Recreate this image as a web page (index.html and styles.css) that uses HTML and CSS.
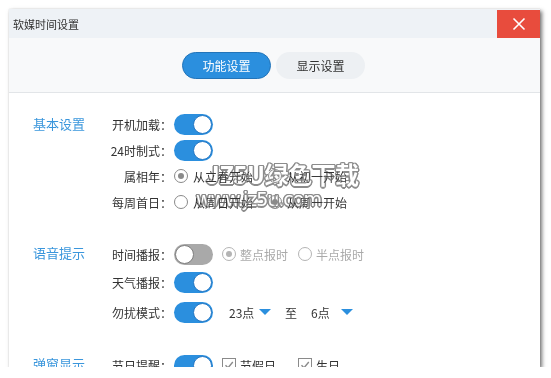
FILE: index.html
```html
<!DOCTYPE html>
<html lang="zh-CN">
<head>
  <meta charset="UTF-8">
  <meta name="viewport" content="width=device-width, initial-scale=1.0">
  <title>软媒时间设置</title>
  <link rel="stylesheet" href="styles.css">
</head>
<body>
  <div class="win">
    <div class="titlebar">
      <span class="title">软媒时间设置</span>
      <button class="close">
        <svg width="14" height="14" viewBox="0 0 14 14"><path d="M1.5 1.5 L12.5 12.5 M12.5 1.5 L1.5 12.5" stroke="#fff" stroke-width="1.6" fill="none"/></svg>
      </button>
    </div>

    <div class="tabs">
      <button class="tab active">功能设置</button>
      <button class="tab">显示设置</button>
    </div>

    <div class="content">
      <section class="group">
        <div class="group-title">基本设置</div>
        <div class="rows">
          <div class="row"><span class="label">开机加载：</span><span class="switch on"><i></i></span></div>
          <div class="row"><span class="label">24时制式：</span><span class="switch on"><i></i></span></div>
          <div class="row">
            <span class="label">属相年：</span>
            <span class="opt"><span class="radio checked"></span>从立春开始</span>
            <span class="opt"><span class="radio"></span>从初一开始</span>
          </div>
          <div class="row">
            <span class="label">每周首日：</span>
            <span class="opt"><span class="radio"></span>从周日开始</span>
            <span class="opt"><span class="radio checked"></span>从周一开始</span>
          </div>
        </div>
      </section>

      <section class="group">
        <div class="group-title">语音提示</div>
        <div class="rows tall">
          <div class="row">
            <span class="label">时间播报：</span><span class="switch off"><i></i></span>
            <span class="opt after disabled"><span class="radio checked"></span>整点报时</span>
            <span class="opt after disabled"><span class="radio"></span>半点报时</span>
          </div>
          <div class="row"><span class="label">天气播报：</span><span class="switch on"><i></i></span></div>
          <div class="row dnd">
            <span class="label">勿扰模式：</span><span class="switch on"><i></i></span>
            <span class="select first">23点<b class="caret"></b></span>
            <span class="to">至</span>
            <span class="select">6点<b class="caret"></b></span>
          </div>
        </div>
      </section>

      <section class="group">
        <div class="group-title">弹窗显示</div>
        <div class="rows tall">
          <div class="row">
            <span class="label">节日提醒：</span><span class="switch on"><i></i></span>
            <span class="opt after"><span class="check"><svg width="10" height="10" viewBox="0 0 10 10"><path d="M1.5 5.2 L4 7.8 L8.8 2" stroke="#8a8a8a" stroke-width="1.4" fill="none"/></svg></span>节假日</span>
            <span class="opt after"><span class="check"><svg width="10" height="10" viewBox="0 0 10 10"><path d="M1.5 5.2 L4 7.8 L8.8 2" stroke="#8a8a8a" stroke-width="1.4" fill="none"/></svg></span>生日</span>
          </div>
        </div>
      </section>
    </div>

    <div class="watermark">
      <div class="wm-big">JZ5U绿色下载</div>
      <div class="wm-small">www.jz5u.com</div>
    </div>
  </div>
</body>
</html>
```

FILE: styles.css
```css
body {
  margin: 0;
  padding: 9px 0 0 9px;
  background: #fff;
  font-family: "Noto Sans CJK SC", "Noto Sans", sans-serif;
  font-size: 12px;
  color: #333;
}

/* window */
.win {
  position: relative;
  width: 531px;
  height: 358px;
  overflow: hidden;
  background: #fff;
  box-shadow: 2px 2px 4px rgba(0,0,0,0.55), 0 0 1px rgba(0,0,0,0.15);
}
.titlebar {
  height: 29px;
  background: #eef2f6;
  display: flex;
  align-items: center;
  justify-content: space-between;
}
.title {
  padding-left: 4px;
  font-size: 11px;
  color: #333;
}
.close {
  width: 43px;
  height: 28px;
  margin-top: 1px;
  border: none;
  background: #e84c3d;
  display: flex;
  align-items: center;
  justify-content: center;
  padding: 0;
  cursor: pointer;
}

/* tabs */
.tabs {
  height: 54px;
  background: #f8f9fa;
  border-bottom: 1px solid #e2e5e8;
  display: flex;
  justify-content: center;
  align-items: center;
  gap: 5px;
  padding-right: 2px;
}
.tab {
  width: 89px;
  height: 27px;
  border-radius: 14px;
  border: 1px solid transparent;
  background: #edf0f3;
  color: #333;
  font-family: inherit;
  font-size: 12px;
  cursor: pointer;
}
.tab.active {
  background: #2b8fde;
  border-color: #2274b9;
  color: #fff;
}

/* content */
.content { padding-top: 18px; }
.group {
  display: flex;
  padding-left: 24px;
  margin-bottom: 25px;
}
.group-title {
  width: 70px;
  height: 26px;
  line-height: 26px;
  font-size: 13px;
  color: #3a96dc;
}
.rows { display: flex; flex-direction: column; }
.row {
  height: 26px;
  display: flex;
  align-items: center;
}
.rows.tall .row { height: 28px; }
.rows.tall .row.dnd { margin-top: 2px; }
.label {
  width: 69px;
  text-align: right;
  margin-right: 2px;
}

/* switch */
.switch {
  width: 39px;
  height: 21px;
  border-radius: 11px;
  box-sizing: border-box;
  padding: 0 1px;
  display: flex;
  align-items: center;
  justify-content: flex-end;
  background: #2b8fde;
}
.switch i {
  width: 19px;
  height: 19px;
  border-radius: 50%;
  background: #fff;
  box-sizing: border-box;
  border: 1px solid #2477c4;
}
.switch.off { background: #a9a9a9; justify-content: flex-start; }
.switch.off i { border-color: #7e7e7e; }

/* radio / checkbox */
.opt {
  display: flex;
  align-items: center;
  gap: 5px;
}
.opt + .opt { margin-left: 15px; }
.opt.after { width: 76px; margin-left: 0; gap: 4px; }
.switch + .opt.after { margin-left: 9px; }
.opt.disabled { color: #aaa; }
.radio {
  width: 14px;
  height: 14px;
  border-radius: 50%;
  box-sizing: border-box;
  border: 1.5px solid #8a8a8a;
  display: flex;
  align-items: center;
  justify-content: center;
}
.radio.checked::before {
  content: "";
  width: 6px;
  height: 6px;
  border-radius: 50%;
  background: #8a8a8a;
}
.disabled .radio { border-color: #b4b4b4; }
.disabled .radio.checked::before { background: #b4b4b4; }
.check {
  width: 14px;
  height: 14px;
  box-sizing: border-box;
  border: 1px solid #8a8a8a;
  display: flex;
  align-items: center;
  justify-content: center;
}

/* dropdowns */
.select {
  width: 42px;
  display: flex;
  align-items: center;
  justify-content: space-between;
}
.select.first { margin-left: 16px; }
.caret {
  width: 0;
  height: 0;
  border-left: 6px solid transparent;
  border-right: 6px solid transparent;
  border-top: 6px solid #2b8fde;
}
.to { margin: 0 14px; }

/* site watermark on top of the shot */
.watermark {
  position: absolute;
  left: 179px;
  top: 151px;
  color: #fff;
  mix-blend-mode: darken;
  text-shadow:
    1.5px 0 0 #8c8c8c, -1.5px 0 0 #8c8c8c, 0 1.5px 0 #8c8c8c, 0 -1.5px 0 #8c8c8c,
    1px 1px 0 #8c8c8c, -1px -1px 0 #8c8c8c, 1px -1px 0 #8c8c8c, -1px 1px 0 #8c8c8c;
  pointer-events: none;
}
.wm-big {
  font-size: 24px;
  line-height: 28px;
  margin-left: 18px;
  letter-spacing: -0.5px;
  font-weight: bold;
}
.wm-small {
  font-family: "DejaVu Sans", sans-serif;
  font-size: 19px;
  line-height: 22px;
  margin-left: 8px;
  letter-spacing: -1px;
}
```
